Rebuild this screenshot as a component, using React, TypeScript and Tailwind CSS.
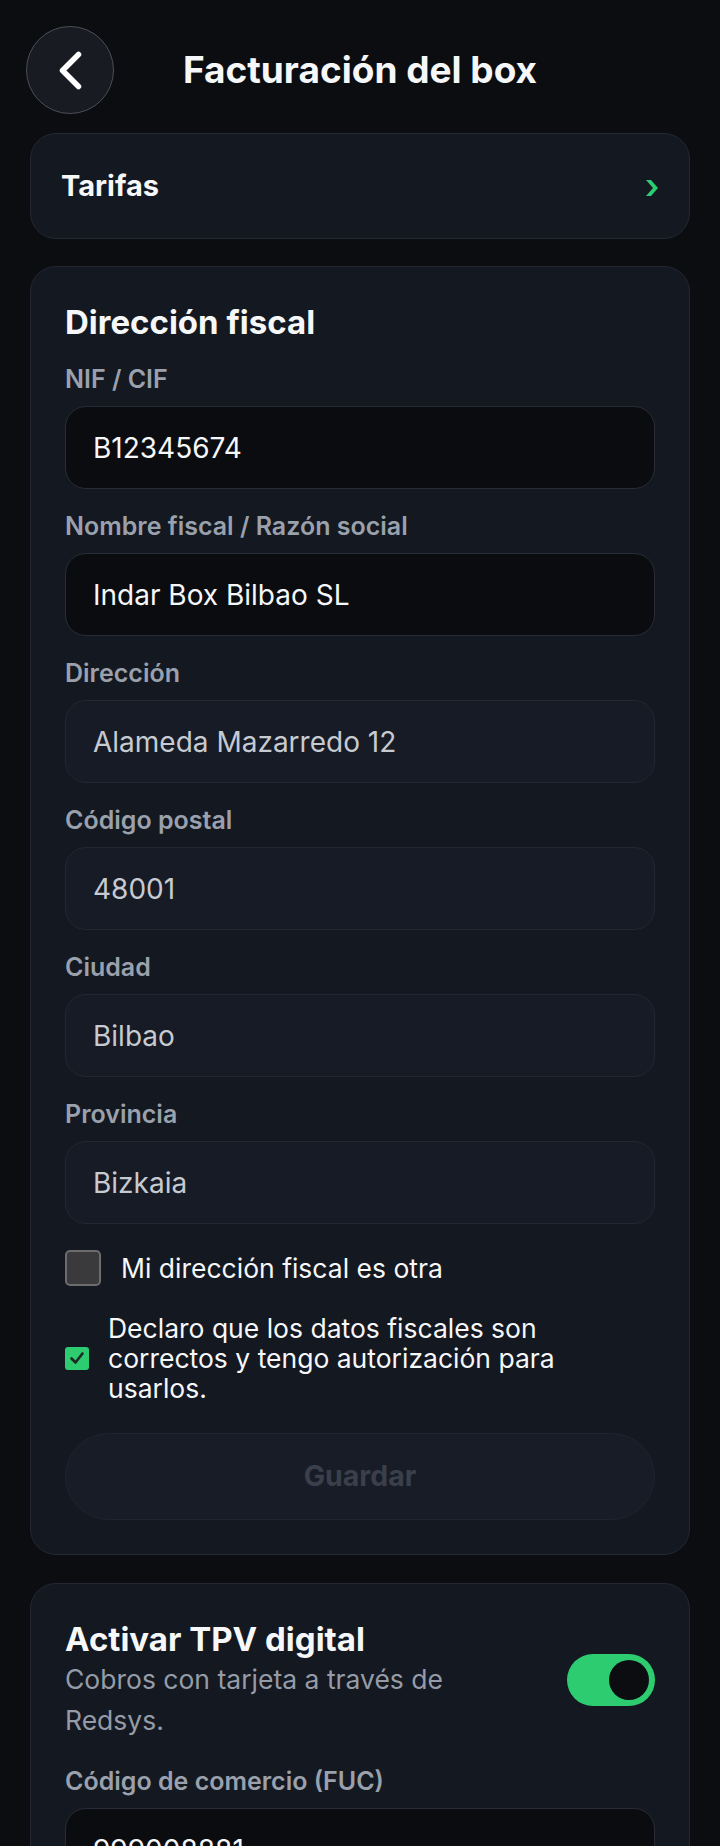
import clsx from "clsx";

type FieldProps = { label: string; value: string; active?: boolean };

const fiscalFields: FieldProps[] = [
  { label: "NIF / CIF", value: "B12345674", active: true },
  { label: "Nombre fiscal / Razón social", value: "Indar Box Bilbao SL", active: true },
  { label: "Dirección", value: "Alameda Mazarredo 12" },
  { label: "Código postal", value: "48001" },
  { label: "Ciudad", value: "Bilbao" },
  { label: "Provincia", value: "Bizkaia" },
];

function Field({ label, value, active }: FieldProps) {
  return (
    <label className="flex flex-col">
      <span className="mb-3 text-[25px] leading-[30px] font-semibold text-[#9aa1ac]">{label}</span>
      <input
        readOnly
        value={value}
        className={clsx(
          "h-[83px] w-full rounded-[21px] border px-[27px] text-[28px] outline-none",
          active
            ? "border-[#272c36] bg-[#0a0c10] text-[#f6f7f9]"
            : "border-[#222732] bg-[#171b25] text-[#c6cad1]"
        )}
      />
    </label>
  );
}

function Card({ children, className }: { children: React.ReactNode; className?: string }) {
  return (
    <section className={clsx("rounded-[26px] border border-[#232833] bg-[#141821]", className)}>
      {children}
    </section>
  );
}

export default function App() {
  return (
    <div className="min-h-screen bg-[#0b0d11] px-[30px] pb-16 pt-[26px] text-[#f6f7f9] [font-family:Inter,'Noto_Sans',sans-serif]">
      <header className="-mx-[4px] flex items-center">
        <button className="flex h-[88px] w-[88px] shrink-0 items-center justify-center rounded-full border-[1.5px] border-[#4c4f57] bg-[#181b22]">
          <svg width="32" height="40" viewBox="0 0 32 40" fill="none">
            <path d="M24.5 4.5 L8.5 20.5 L24.5 36.5" stroke="white" strokeWidth="5.5" strokeLinecap="round" strokeLinejoin="round" />
          </svg>
        </button>
        <h1 className="flex-1 text-center text-[37px] leading-[44px] font-bold">Facturación del box</h1>
        <div className="w-[88px] shrink-0" />
      </header>

      <Card className="mt-[19px] flex h-[106px] items-center justify-between pl-[30px] pr-[31px]">
        <span className="text-[29px] font-bold">Tarifas</span>
        <svg width="12" height="16" viewBox="0 0 12 16" className="mt-1">
          <path d="M0 0 H5 L12 8 L5 16 H0 L7 8 Z" fill="#2ecc71" />
        </svg>
      </Card>

      <Card className="mt-[27px] flex flex-col gap-[22px] px-[34px] pb-[34px] pt-[35px]">
        <h2 className="text-[33px] leading-[40px] font-bold">Dirección fiscal</h2>
        {fiscalFields.map((f) => (
          <Field key={f.label} {...f} />
        ))}

        <div className="mt-1 flex items-center gap-5">
          <span className="h-[36px] w-[36px] shrink-0 rounded-[5px] border-2 border-[#6c6c6f] bg-[#3a3a3d]" />
          <span className="text-[26.5px] leading-[30px]">Mi dirección fiscal es otra</span>
        </div>

        <div className="mt-[5px] flex items-center gap-[19px]">
          <span className="flex h-[23px] w-[24px] shrink-0 items-center justify-center rounded-[3px] bg-[#2ecc71]">
            <svg width="16" height="14" viewBox="0 0 16 14" fill="none">
              <path d="M2.5 7.5 L6.5 11.5 L13.5 2.5" stroke="#1d2a22" strokeWidth="2.6" strokeLinecap="round" strokeLinejoin="round" />
            </svg>
          </span>
          <p className="max-w-[500px] text-[26.5px] leading-[30px]">
            Declaro que los datos fiscales son correctos y tengo autorización para usarlos.
          </p>
        </div>

        <button className="mt-2 h-[87px] w-full rounded-full border border-[#1f2430] bg-[#181c26] text-[28.5px] font-bold text-[#3a404b]">
          Guardar
        </button>
      </Card>

      <Card className="mt-[28px] flex flex-col gap-[22px] px-[34px] pb-[35px] pt-[35px]">
        <div className="flex items-center justify-between">
          <div className="max-w-[430px]">
            <h2 className="text-[33px] leading-[40px] font-bold">Activar TPV digital</h2>
            <p className="text-[26.5px] leading-[41px] text-[#959ca7]">Cobros con tarjeta a través de Redsys.</p>
          </div>
          <span className="flex h-[52px] w-[88px] items-center justify-end rounded-full bg-[#2ecc71] pr-[6px]">
            <span className="h-[40px] w-[40px] rounded-full bg-[#0b0d11]" />
          </span>
        </div>
        <div className="mt-[3px] flex flex-col gap-[22px]">
          <Field label="Código de comercio (FUC)" value="999008881" active />
          <Field label="Terminal" value="1" active />
          <Field label="Clave secreta (SHA-256)" value="sq7HjrUOBfKmC576ILgskD5srU870gJ7" active />
        </div>
      </Card>
    </div>
  );
}
